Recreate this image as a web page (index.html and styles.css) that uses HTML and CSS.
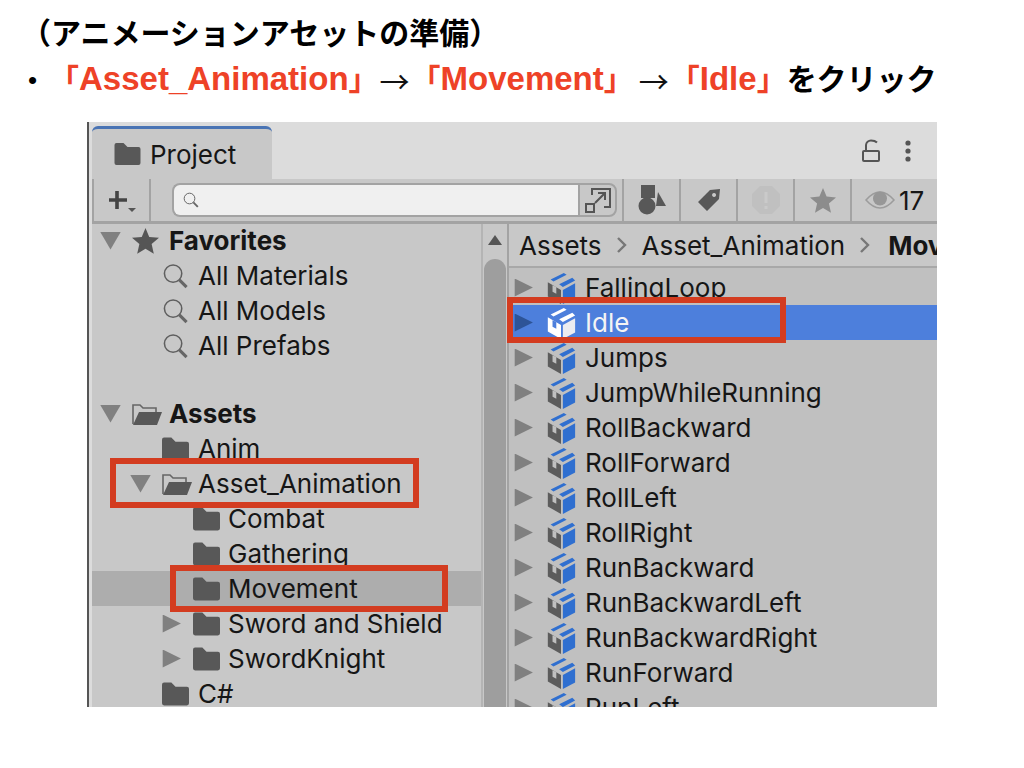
FILE: index.html
```html
<!DOCTYPE html>
<html lang="ja">
	<head>
		<meta charset="UTF-8">
		<title>アニメーションアセットの準備</title>
		<link rel="stylesheet" href="styles.css">
	</head>
	<body>
		<svg class="defs" width="0" height="0">
			<symbol id="i-folder" viewBox="0 0 26 22"><path d="M2 0h7l4 4h11a2 2 0 0 1 2 2v14a2 2 0 0 1-2 2H2a2 2 0 0 1-2-2V2a2 2 0 0 1 2-2z" fill="#585858"/></symbol>
			<symbol id="i-open" viewBox="0 0 30 22"><path d="M1 21V2h7l3 3h13v4" fill="none" stroke="#666" stroke-width="1.6"/><path d="M7 9h23l-5 13H1z" fill="#585858"/></symbol>
			<symbol id="i-search" viewBox="0 0 27 27"><circle cx="11" cy="11" r="9" fill="none" stroke="#5f5f5f" stroke-width="1.6"/><path d="M17.5 17.5L25 25" stroke="#666" stroke-width="3.2"/></symbol>
			<symbol id="i-star" viewBox="0 0 26 25"><path d="M13 0l3.6 8.6 9.4.8-7.1 6.1 2.1 9.2-8-4.8-8 4.8 2.1-9.2L0 9.4l9.4-.8z"/></symbol>
			<symbol id="i-cube" viewBox="0 0 30 34"><path d="M1 11l14 8v15L1 26z" fill="#5c5c5c"/><path d="M17 19l13-7v15l-13 7z" fill="#2f6fd0"/><path d="M4 8L18 1l3 2L7 10zM13 13l14-7 3 3-13 7z" fill="#2f6fd0"/><path d="M6 14l4 2v7l-4-2z" fill="#c0c0c0"/></symbol>
			<symbol id="i-cube-on" viewBox="0 0 30 34"><path d="M1 11l14 8v15L1 26z" fill="#fff"/><path d="M17 19l13-7v15l-13 7z" fill="#ececf0"/><path d="M4 8L18 1l3 2L7 10zM13 13l14-7 3 3-13 7z" fill="#fff"/><path d="M6 14l4 2v7l-4-2z" fill="#4d7fdc"/></symbol>
		</svg>

		<header class="head">
			<h1 class="title">（アニメーションアセットの準備）</h1>
			<p class="step">
				<span class="dot">•</span>
				<b class="hot">「<span class="en">Asset_Animation</span>」</b><span class="arrow">→</span><b class="hot">「<span class="en">Movement</span>」</b><span class="arrow arrow-next">→</span><b class="hot">「<span class="en">Idle</span>」</b><b>をクリック</b>
			</p>
		</header>

		<div class="window">
			<div class="tabbar">
				<div class="tab">
					<svg class="tab-icon"><use href="#i-folder"/></svg>
					<span>Project</span>
				</div>
				<div class="tab-tools">
					<svg width="18" height="23" viewBox="0 0 18 23"><path d="M4 12V6a5 5 0 0 1 5-4.500c2.500 0 4.500 .5 6 2" fill="none" stroke="#555" stroke-width="2"/><rect x="1" y="12" width="16" height="10" rx="1" fill="none" stroke="#555" stroke-width="2"/></svg>
					<svg width="10" height="24" viewBox="0 0 10 24"><circle cx="5" cy="4" r="2.600" fill="#555"/><circle cx="5" cy="12" r="2.600" fill="#555"/><circle cx="5" cy="20" r="2.600" fill="#555"/></svg>
				</div>
			</div>

			<div class="toolbar">
				<div class="tool tool-add">
					<svg width="30" height="28" viewBox="0 0 30 28"><path d="M9 5v18M1 14h18" stroke="#444" stroke-width="3.600"/><path d="M20 22h8l-4 4z" fill="#555"/></svg>
				</div>
				<div class="search">
					<div class="search-input">
						<svg width="16" height="16"><use href="#i-search"/></svg>
					</div>
					<div class="search-toggle">
						<svg width="28" height="28" viewBox="0 0 28 28"><path d="M8 9V3h18v18h-6" fill="none" stroke="#555" stroke-width="2"/><rect x="2" y="18" width="8" height="8" fill="none" stroke="#555" stroke-width="2"/><path d="M11 17l9-9M14 7h7v7" fill="none" stroke="#555" stroke-width="2"/></svg>
					</div>
				</div>
				<div class="tool">
					<svg width="28" height="32" viewBox="0 0 28 32"><rect x="3" y="1" width="14" height="13" fill="#585858"/><circle cx="9" cy="22" r="8.500" fill="#585858"/><path d="M20 8l8 14H18z" fill="#585858"/></svg>
				</div>
				<div class="tool">
					<svg width="24" height="24" viewBox="0 0 24 24"><path d="M1 14L13 2l10-1-1 10-12 12zM17 5a2 2 0 1 0 .1 0z" fill="#585858" fill-rule="evenodd"/></svg>
				</div>
				<div class="tool">
					<svg width="28" height="28" viewBox="0 0 28 28"><path d="M8 0h12l8 8v12l-8 8H8l-8-8V8z" fill="#c0c0c0"/><path d="M14 6v11M14 20v3" stroke="#cacaca" stroke-width="3"/></svg>
				</div>
				<div class="tool">
					<svg class="star-tool" width="26" height="25"><use href="#i-star"/></svg>
				</div>
				<div class="tool tool-eye">
					<svg width="30" height="20" viewBox="0 0 30 20"><path d="M1 10Q15-6 29 10 15 26 1 10z" fill="none" stroke="#9c9c9c" stroke-width="1.500"/><circle cx="15" cy="8.500" r="7" fill="#979797"/></svg>
					<span>17</span>
				</div>
			</div>

			<div class="body">
				<div class="tree">
					<div class="row lv0 bold"><i class="tri down"></i><svg class="ic star"><use href="#i-star"/></svg><span>Favorites</span></div>
					<div class="row lv1"><i class="tri none"></i><svg class="ic"><use href="#i-search"/></svg><span>All Materials</span></div>
					<div class="row lv1"><i class="tri none"></i><svg class="ic"><use href="#i-search"/></svg><span>All Models</span></div>
					<div class="row lv1"><i class="tri none"></i><svg class="ic"><use href="#i-search"/></svg><span>All Prefabs</span></div>
					<div class="row-gap"></div>
					<div class="row lv0 bold"><i class="tri down"></i><svg class="ic open"><use href="#i-open"/></svg><span>Assets</span></div>
					<div class="row lv1"><i class="tri none"></i><svg class="ic"><use href="#i-folder"/></svg><span>Anim</span></div>
					<div class="row lv1"><i class="tri down"></i><svg class="ic open"><use href="#i-open"/></svg><span>Asset_Animation</span></div>
					<div class="row lv2"><i class="tri none"></i><svg class="ic"><use href="#i-folder"/></svg><span>Combat</span></div>
					<div class="row lv2"><i class="tri none"></i><svg class="ic"><use href="#i-folder"/></svg><span>Gathering</span></div>
					<div class="row lv2 picked"><i class="tri none"></i><svg class="ic"><use href="#i-folder"/></svg><span>Movement</span></div>
					<div class="row lv2"><i class="tri right"></i><svg class="ic"><use href="#i-folder"/></svg><span>Sword and Shield</span></div>
					<div class="row lv2"><i class="tri right"></i><svg class="ic"><use href="#i-folder"/></svg><span>SwordKnight</span></div>
					<div class="row lv1"><i class="tri none"></i><svg class="ic"><use href="#i-folder"/></svg><span>C#</span></div>
				</div>

				<div class="scroll">
					<i class="scroll-up"></i>
					<div class="scroll-thumb"></div>
				</div>

				<div class="files">
					<div class="crumbs">
						<span>Assets</span>
						<svg width="12" height="18" viewBox="0 0 12 18"><path d="M2 2l7 7-7 7" fill="none" stroke="#777" stroke-width="2.400"/></svg>
						<span>Asset_Animation</span>
						<svg width="12" height="18" viewBox="0 0 12 18"><path d="M2 2l7 7-7 7" fill="none" stroke="#777" stroke-width="2.400"/></svg>
						<b>Movement</b>
					</div>
					<div class="list">
						<div class="file"><i class="tri right"></i><svg class="cube"><use href="#i-cube"/></svg><span>FallingLoop</span></div>
						<div class="file on"><i class="tri right"></i><svg class="cube"><use href="#i-cube-on"/></svg><span>Idle</span></div>
						<div class="file"><i class="tri right"></i><svg class="cube"><use href="#i-cube"/></svg><span>Jumps</span></div>
						<div class="file"><i class="tri right"></i><svg class="cube"><use href="#i-cube"/></svg><span>JumpWhileRunning</span></div>
						<div class="file"><i class="tri right"></i><svg class="cube"><use href="#i-cube"/></svg><span>RollBackward</span></div>
						<div class="file"><i class="tri right"></i><svg class="cube"><use href="#i-cube"/></svg><span>RollForward</span></div>
						<div class="file"><i class="tri right"></i><svg class="cube"><use href="#i-cube"/></svg><span>RollLeft</span></div>
						<div class="file"><i class="tri right"></i><svg class="cube"><use href="#i-cube"/></svg><span>RollRight</span></div>
						<div class="file"><i class="tri right"></i><svg class="cube"><use href="#i-cube"/></svg><span>RunBackward</span></div>
						<div class="file"><i class="tri right"></i><svg class="cube"><use href="#i-cube"/></svg><span>RunBackwardLeft</span></div>
						<div class="file"><i class="tri right"></i><svg class="cube"><use href="#i-cube"/></svg><span>RunBackwardRight</span></div>
						<div class="file"><i class="tri right"></i><svg class="cube"><use href="#i-cube"/></svg><span>RunForward</span></div>
						<div class="file"><i class="tri right"></i><svg class="cube"><use href="#i-cube"/></svg><span>RunLeft</span></div>
					</div>
				</div>
			</div>

			<!-- 赤枠 -->
			<div class="mark mark-asset"></div>
			<div class="mark mark-move"></div>
			<div class="mark mark-idle"></div>
		</div>
	</body>
</html>
```

FILE: styles.css
```css
html, body {
	margin: 0;
	padding: 0;
	background: #fff;
}

body {
	width: 1024px;
	height: 768px;
	overflow: hidden;
	font-family: "Liberation Sans", "Noto Sans CJK JP", sans-serif;
	color: #000;
}

.defs {
	display: block;
	height: 0;
}

.head {
	height: 122px;
	padding-left: 21px;
	box-sizing: border-box;
}

.title {
	margin: 0;
	padding-top: 13px;
	font-size: 30px;
	line-height: 42px;
	font-weight: 700;
	letter-spacing: 0;
}

.step {
	margin: 0;
	padding-top: 3px;
	font-size: 30px;
	line-height: 42px;
	white-space: nowrap;
	display: flex;
	align-items: center;
}

.dot {
	width: 28px;
	padding-left: 7px;
	box-sizing: border-box;
	font-size: 26px;
}

.hot {
	color: #ee4227;
}

.en {
	font-size: 33px;
}

.arrow {
	width: 32px;
	text-align: center;
	font-family: "Noto Sans CJK JP", sans-serif;
	font-weight: 400;
	color: #111;
}

.arrow-next {
	margin-left: 4px;
}

.window {
	position: relative;
	width: 850px;
	height: 585px;
	margin-left: 87px;
	box-sizing: border-box;
	border-left: 2px solid #555;
	background: #dcdcdc;
	overflow: hidden;
	font-family: Inter, "Liberation Sans", sans-serif;
	font-size: 26px;
	color: #161616;
}

.tabbar {
	height: 57px;
	display: flex;
	justify-content: space-between;
	padding-left: 3px;
	padding-top: 4px;
	box-sizing: border-box;
}

.tab {
	width: 180px;
	background: #c8c8c8;
	border-top: 3px solid #4a74b4;
	border-radius: 6px 6px 0 0;
	display: flex;
	align-items: center;
	box-sizing: border-box;
	padding-left: 22px;
	gap: 9px;
}

.tab-icon {
	width: 27px;
	height: 22px;
}

.tab-tools {
	display: flex;
	align-items: center;
	gap: 23px;
	padding-right: 24px;
	padding-bottom: 4px;
}

.toolbar {
	height: 45px;
	display: flex;
	background: #c8c8c8;
	box-sizing: border-box;
	margin-left: 3px;
	border-bottom: 3px solid #a3a3a3;
}

.tool {
	width: 57px;
	box-sizing: border-box;
	border-left: 2px solid #a3a3a3;
	display: flex;
	align-items: center;
	justify-content: center;
	flex: none;
}

.tool-add {
	width: 59px;
	border-right: 2px solid #a3a3a3;
	flex: none;
	padding-left: 2px;
}

.tool-eye {
	width: 86px;
	gap: 4px;
	justify-content: flex-start;
	padding-left: 13px;
}

.star-tool {
	fill: #8c8c8c;
}

.search {
	width: 471px;
	flex: none;
	display: flex;
	align-items: center;
	padding: 0 5px 0 21px;
	box-sizing: border-box;
}

.search-input {
	flex: 1;
	height: 34px;
	background: #f0f0f0;
	border: 2px solid #a3a3a3;
	border-right: 0;
	border-radius: 8px 0 0 8px;
	box-sizing: border-box;
	display: flex;
	align-items: center;
	padding-left: 9px;
}

.search-toggle {
	width: 39px;
	height: 34px;
	border: 2px solid #a3a3a3;
	border-radius: 0 8px 8px 0;
	box-sizing: border-box;
	display: flex;
	align-items: center;
	justify-content: center;
}

.body {
	display: flex;
	margin-left: 3px;
	height: 483px;
	background: #c8c8c8;
}

.tree {
	width: 389px;
	flex: none;
	margin-top: -1px;
}

.row {
	height: 35px;
	display: flex;
	align-items: center;
	white-space: nowrap;
}

.row-gap {
	height: 33px;
}

.lv0 {
	padding-left: 8px;
}

.lv1 {
	padding-left: 38px;
}

.lv2 {
	padding-left: 69px;
}

.bold {
	font-weight: 700;
}

.lv0 .ic {
	margin-right: 10px;
}

.lv2 .ic {
	margin-right: 8px;
}

.picked {
	background: #adadad;
}

.tri {
	display: block;
	width: 21px;
	height: 18px;
	margin-right: 11px;
	flex: none;
}

.tri.down {
	background: #808080;
	clip-path: polygon(0 0, 100% 0, 50% 100%);
}

.tri.right {
	background: #808080;
	clip-path: polygon(8% 0, 95% 50%, 8% 100%);
}

.ic {
	width: 27px;
	height: 26px;
	margin-right: 9px;
	flex: none;
}

.ic.star {
	fill: #555;
}

.ic.open {
	width: 30px;
	margin-right: 6px;
}

.lv0 .ic.open {
	margin-right: 7px;
}

.scroll {
	width: 28px;
	flex: none;
	box-sizing: border-box;
	border-left: 2px solid #b4b4b4;
	border-right: 2px solid #a3a3a3;
	padding: 11px 1px 0;
}

.scroll-up {
	display: block;
	width: 14px;
	height: 10px;
	margin: 0 auto 14px;
	background: #555;
	clip-path: polygon(50% 0, 100% 100%, 0 100%);
}

.scroll-thumb {
	height: 460px;
	background: #9e9e9e;
	border-radius: 11px 11px 0 0;
}

.files {
	flex: 1;
	min-width: 0;
	overflow: hidden;
}

.crumbs {
	height: 44px;
	box-sizing: border-box;
	border-bottom: 2px solid #a8a8a8;
	display: flex;
	align-items: center;
	gap: 14px;
	padding-left: 10px;
	white-space: nowrap;
}

.crumbs > * {
	flex: none;
}

.crumbs b {
	margin-left: 3px;
}

.list {
	background: #c0c0c0;
	height: 439px;
	padding-top: 2px;
	box-sizing: border-box;
}

.file {
	height: 35px;
	display: flex;
	align-items: center;
	padding-left: 4px;
	white-space: nowrap;
}

.file .tri {
	width: 21px;
	margin-right: 12px;
}

.cube {
	width: 30px;
	height: 32px;
	margin-right: 9px;
	flex: none;
}

.file.on {
	background: #4d7fdc;
	color: #f4f4f4;
}

.file.on .tri.right {
	background: #2d5498;
}

.mark {
	position: absolute;
	border: 6px solid #d33c20;
	box-sizing: border-box;
}

.mark-asset {
	left: 21px;
	top: 336px;
	width: 309px;
	height: 50px;
}

.mark-move {
	left: 81px;
	top: 443px;
	width: 278px;
	height: 47px;
}

.mark-idle {
	left: 418px;
	top: 175px;
	width: 279px;
	height: 46px;
}
```
